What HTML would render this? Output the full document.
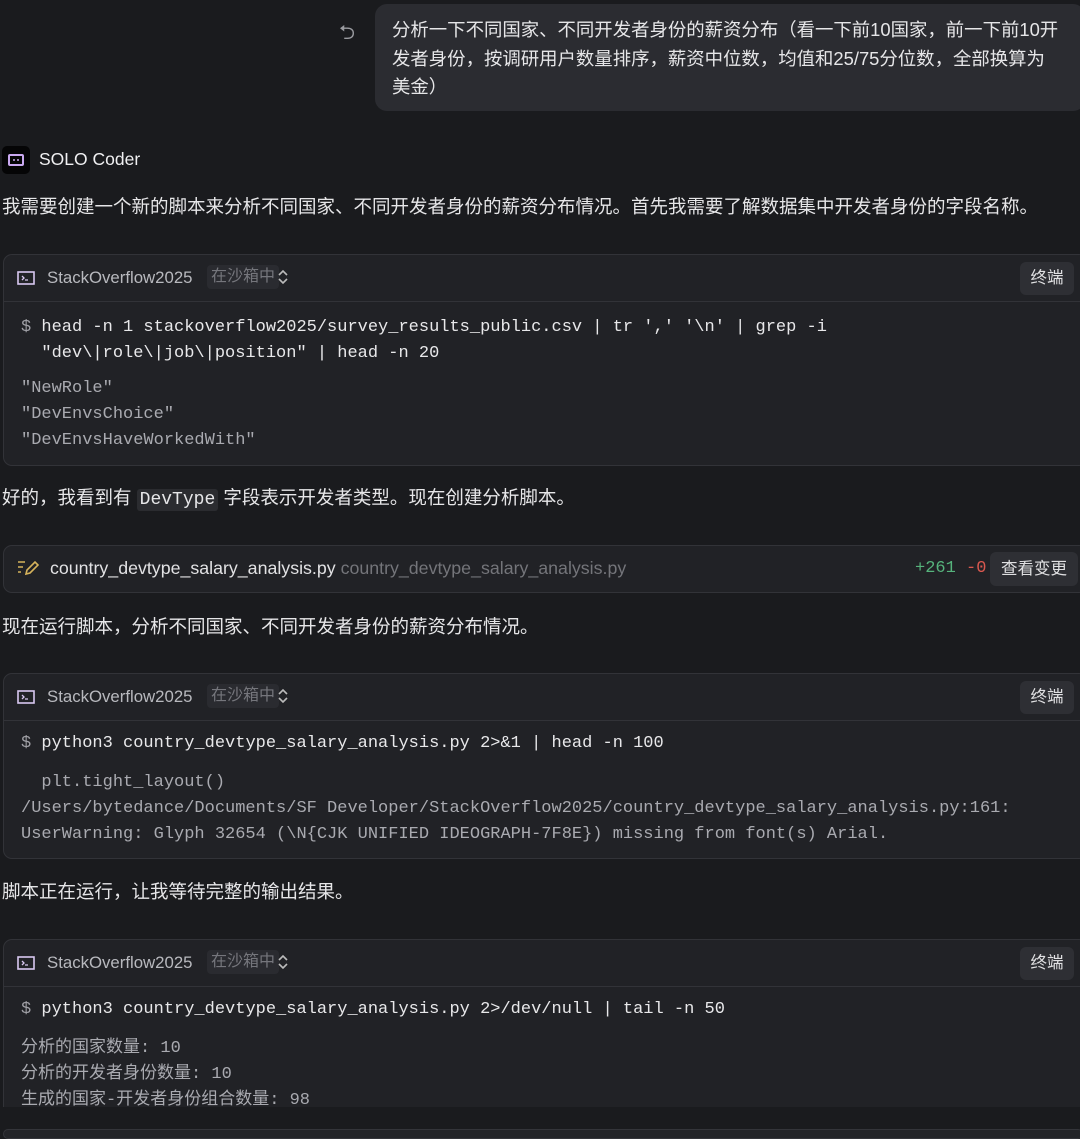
<!DOCTYPE html>
<html><head><meta charset="utf-8"><style>
*{margin:0;padding:0;box-sizing:border-box}
body{width:1080px;height:1134px;background:#1a1b1e;color:#e3e3e6;font-family:"Liberation Sans","Noto Sans CJK SC",sans-serif;position:relative;overflow:hidden}
.a{position:absolute;white-space:nowrap}
.t{font-size:18.5px;color:#e6e6e8}
.card{position:absolute;left:3px;width:1085px;background:#212226;border:1.5px solid #323338;border-radius:9px;overflow:hidden}
.hd{height:47px;border-bottom:1.5px solid #323338;position:relative}
.mono{font-family:"Liberation Mono","Noto Sans CJK SC",monospace;font-size:17px;color:#e8e8ea}
.out{color:#a9aab0}
.btn{position:absolute;right:13px;top:7px;height:33px;width:54px;background:#2e2f34;border-radius:6px;font-size:16.5px;color:#e0e0e2;text-align:center;line-height:33px}
.name{position:absolute;left:43px;top:13px;font-size:16.8px;color:#b8b9be}
.sb{position:absolute;left:203px;top:10px;background:#2a2b30;border-radius:4px;padding:2px 4px;font-size:16px;line-height:20px;color:#75767c}
.ar{position:absolute;left:274px;top:14px}
</style></head><body>
<div class="a" style="left:339px;top:18px;color:#9a9ba0;font-size:20px">⮌</div>
<div class="a" style="left:375px;top:4px;width:710px;height:107px;background:#2b2c31;border-radius:12px"></div>
<div class="a t" style="left:392px;top:16px;line-height:28.5px;font-size:18.4px">分析一下不同国家、不同开发者身份的薪资分布（看一下前10国家，前一下前10开<br>发者身份，按调研用户数量排序，薪资中位数，均值和25/75分位数，全部换算为<br>美金）</div>
<div class="a" style="left:2px;top:146px;width:28px;height:28px;background:#050506;border-radius:5px"><svg width="28" height="28"><rect x="7" y="9" width="14" height="10" rx="1" fill="none" stroke="#c9a8f0" stroke-width="2"/><circle cx="12" cy="14" r="1" fill="#c9a8f0"/><circle cx="16" cy="14" r="1" fill="#c9a8f0"/></svg></div>
<div class="a" style="left:39px;top:149px;font-size:17.5px;color:#f0f0f2">SOLO Coder</div>
<div class="a t" style="left:2px;top:193px">我需要创建一个新的脚本来分析不同国家、不同开发者身份的薪资分布情况。首先我需要了解数据集中开发者身份的字段名称。</div>

<div class="card" style="top:254px;height:212px">
<div class="hd"><svg class="a" style="left:13px;top:16px" width="18" height="15"><rect x="1" y="1" width="16" height="12" fill="none" stroke="#d8c8f0" stroke-width="1.6"/><path d="M5 5l2 2-2 2M8 9h3" stroke="#d8c8f0" stroke-width="1.3" fill="none"/></svg><span class="name">StackOverflow2025</span><span class="sb">在沙箱中</span><svg class="ar" width="10" height="16"><path d="M1 6l4-4 4 4M1 10l4 4 4-4" stroke="#bbb" stroke-width="1.6" fill="none"/></svg><div class="btn">终端</div></div>
<div class="a mono" style="left:17px;top:60px;line-height:25.5px"><span style="color:#a0a0a6">$</span> head -n 1 stackoverflow2025/survey_results_public.csv | tr ',' '\n' | grep -i<br>&nbsp; "dev\|role\|job\|position" | head -n 20</div>
<div class="a mono out" style="left:17px;top:121px;line-height:26px">"NewRole"<br>"DevEnvsChoice"<br>"DevEnvsHaveWorkedWith"</div>
</div>

<div class="a t" style="left:2px;top:484px">好的，我看到有 <span style="font-family:'Liberation Mono',monospace;font-size:18px;background:#2b2c30;padding:1px 3px;border-radius:3px">DevType</span> 字段表示开发者类型。现在创建分析脚本。</div>

<div class="card" style="top:545px;height:48px">
<svg class="a" style="left:13px;top:13px" width="22" height="18"><path d="M1 3h7M1 8h5M1 13h3M9 15l1-4 8-8 3 3-8 8z" stroke="#d6b35c" stroke-width="1.6" fill="none"/></svg>
<span class="a" style="left:46px;top:12px;font-size:17.8px;color:#e2e2e4">country_devtype_salary_analysis.py <span style="color:#74757a">country_devtype_salary_analysis.py</span></span>
<span class="a mono" style="left:911px;top:13px;color:#56b37c">+261<span style="color:#d9584f"> -0</span></span>
<div class="a" style="left:986px;top:6px;width:88px;height:34px;background:#2e2f34;border-radius:6px;font-size:16.5px;line-height:34px;text-align:center;color:#e0e0e2">查看变更</div>
</div>

<div class="a t" style="left:2px;top:613px">现在运行脚本，分析不同国家、不同开发者身份的薪资分布情况。</div>

<div class="card" style="top:673px;height:186px">
<div class="hd"><svg class="a" style="left:13px;top:16px" width="18" height="15"><rect x="1" y="1" width="16" height="12" fill="none" stroke="#d8c8f0" stroke-width="1.6"/><path d="M5 5l2 2-2 2M8 9h3" stroke="#d8c8f0" stroke-width="1.3" fill="none"/></svg><span class="name">StackOverflow2025</span><span class="sb">在沙箱中</span><svg class="ar" width="10" height="16"><path d="M1 6l4-4 4 4M1 10l4 4 4-4" stroke="#bbb" stroke-width="1.6" fill="none"/></svg><div class="btn">终端</div></div>
<div class="a mono" style="left:17px;top:60px"><span style="color:#a0a0a6">$</span> python3 country_devtype_salary_analysis.py 2&gt;&amp;1 | head -n 100</div>
<div class="a mono out" style="left:17px;top:96px;line-height:26px">&nbsp; plt.tight_layout()<br>/Users/bytedance/Documents/SF Developer/StackOverflow2025/country_devtype_salary_analysis.py:161:<br>UserWarning: Glyph 32654 (\N{CJK UNIFIED IDEOGRAPH-7F8E}) missing from font(s) Arial.</div>
</div>

<div class="a t" style="left:2px;top:878px">脚本正在运行，让我等待完整的输出结果。</div>

<div class="card" style="top:939px;height:190px">
<div class="hd"><svg class="a" style="left:13px;top:16px" width="18" height="15"><rect x="1" y="1" width="16" height="12" fill="none" stroke="#d8c8f0" stroke-width="1.6"/><path d="M5 5l2 2-2 2M8 9h3" stroke="#d8c8f0" stroke-width="1.3" fill="none"/></svg><span class="name">StackOverflow2025</span><span class="sb">在沙箱中</span><svg class="ar" width="10" height="16"><path d="M1 6l4-4 4 4M1 10l4 4 4-4" stroke="#bbb" stroke-width="1.6" fill="none"/></svg><div class="btn">终端</div></div>
<div class="a mono" style="left:17px;top:60px"><span style="color:#a0a0a6">$</span> python3 country_devtype_salary_analysis.py 2&gt;/dev/null | tail -n 50</div>
<div class="a mono out" style="left:17px;top:96px;line-height:26px">分析的国家数量: 10<br>分析的开发者身份数量: 10<br>生成的国家-开发者身份组合数量: 98</div>
</div>
<div class="a" style="left:0;top:1107px;width:1080px;height:27px;background:#1a1b1e"></div>
<div class="a" style="left:3px;top:1129px;width:1080px;height:10px;background:#232428;border:1.5px solid #34353a;border-radius:6px"></div>
</body></html>
